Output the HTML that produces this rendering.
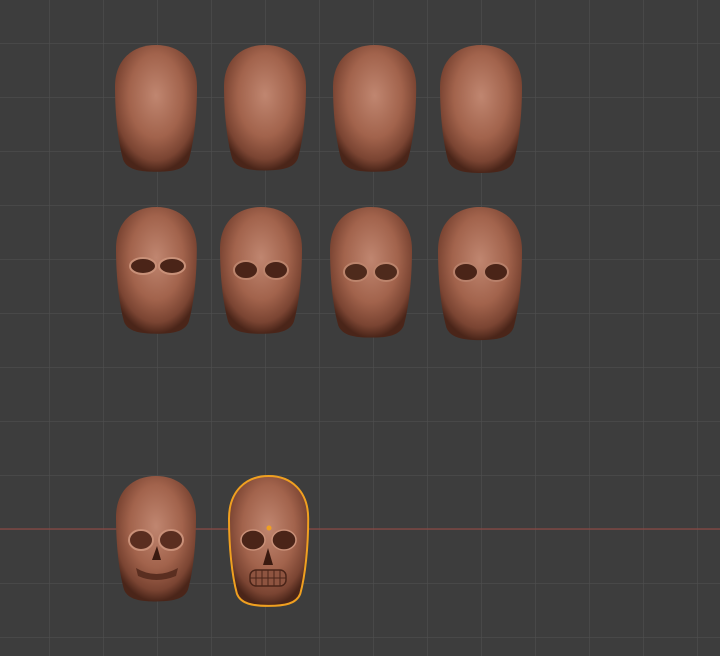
<!DOCTYPE html>
<html><head><meta charset="utf-8"><style>
html,body{margin:0;padding:0;background:#3d3d3d;}
svg{display:block}
</style></head><body>
<svg width="720" height="656" viewBox="0 0 720 656" xmlns="http://www.w3.org/2000/svg">
<defs>
<radialGradient id="g" cx="0.5" cy="0.4" r="0.6">
<stop offset="0" stop-color="#c08670"/>
<stop offset="0.55" stop-color="#a2634c"/>
<stop offset="0.85" stop-color="#7a4432"/>
<stop offset="1" stop-color="#4a2519"/>
</radialGradient>
<path id="h" d="M40,0 C63,0 80,15 80,42 C80,70 77,98 72,116 C68,126 56,128 40,128 C24,128 12,126 8,116 C3,98 0,70 0,42 C0,15 17,0 40,0Z"/>
<pattern id="grid" width="54" height="54" patternUnits="userSpaceOnUse" x="49" y="43">
<path d="M0,0 H54 M0,0 V54" stroke="#4e4e4e" stroke-width="1.2" fill="none"/>
</pattern>
</defs>
<rect width="720" height="656" fill="#3d3d3d"/>
<rect width="720" height="656" fill="url(#grid)"/>
<line x1="0" y1="529" x2="720" y2="529" stroke="#8a4a44" stroke-width="1.2"/>

<use href="#h" fill="url(#g)" transform="translate(115,45) scale(1.025,0.99)"/>
<use href="#h" fill="url(#g)" transform="translate(224,45) scale(1.025,0.98)"/>
<use href="#h" fill="url(#g)" transform="translate(333,45) scale(1.04,0.99)"/>
<use href="#h" fill="url(#g)" transform="translate(440,45) scale(1.025,1.0)"/>

<g>
<use href="#h" fill="url(#g)" transform="translate(116,207) scale(1.01,0.99)"/>
<ellipse cx="143" cy="266" rx="13" ry="8" fill="#4a2418" stroke="#c89078" stroke-width="2"/>
<ellipse cx="172" cy="266" rx="13" ry="8" fill="#4a2418" stroke="#c89078" stroke-width="2"/>
</g>
<g>
<use href="#h" fill="url(#g)" transform="translate(220,207) scale(1.025,0.99)"/>
<ellipse cx="246" cy="270" rx="12" ry="9" fill="#4a2418" stroke="#bc846c" stroke-width="2"/>
<ellipse cx="276" cy="270" rx="12" ry="9" fill="#4a2418" stroke="#bc846c" stroke-width="2"/>
</g>
<g>
<use href="#h" fill="url(#g)" transform="translate(330,207) scale(1.025,1.02)"/>
<ellipse cx="356" cy="272" rx="12" ry="9" fill="#4e2a1c" stroke="#bc846c" stroke-width="2"/>
<ellipse cx="386" cy="272" rx="12" ry="9" fill="#4e2a1c" stroke="#bc846c" stroke-width="2"/>
</g>
<g>
<use href="#h" fill="url(#g)" transform="translate(438,207) scale(1.05,1.04)"/>
<ellipse cx="466" cy="272" rx="12" ry="9" fill="#4a2418" stroke="#b8806a" stroke-width="2"/>
<ellipse cx="496" cy="272" rx="12" ry="9" fill="#4a2418" stroke="#b8806a" stroke-width="2"/>
</g>

<g>
<use href="#h" fill="url(#g)" transform="translate(116,476) scale(1.0,0.98)"/>
<ellipse cx="141" cy="540" rx="12" ry="10" fill="#5a2e20" stroke="#c99078" stroke-width="2"/>
<ellipse cx="171" cy="540" rx="12" ry="10" fill="#5a2e20" stroke="#c99078" stroke-width="2"/>
<path d="M152,560 L157,546 L161,560Z" fill="#3a1a10"/>
<path d="M136,568 Q156,580 178,568 L176,576 Q156,584 138,576Z" fill="#5a2e20"/>
</g>
<g>
<use href="#h" fill="url(#g)" stroke="#f0a020" stroke-width="2" transform="translate(229,476) scale(0.99,1.015)"/>
<ellipse cx="253" cy="540" rx="12" ry="10" fill="#4a2418" stroke="#c99078" stroke-width="1.5"/>
<ellipse cx="284" cy="540" rx="12" ry="10" fill="#4a2418" stroke="#c99078" stroke-width="1.5"/>
<path d="M263,565 L268,548 L273,565Z" fill="#3a1a10"/>
<rect x="250" y="570" width="36" height="16" rx="6" fill="#8e5440" stroke="#4a2418" stroke-width="1.5"/>
<path d="M256,570 V586 M262,570 V586 M268,570 V586 M274,570 V586 M280,570 V586 M250,578 H286" stroke="#4a2418" stroke-width="1"/>
<circle cx="269" cy="528" r="2.5" fill="#f0a020"/>
</g>
</svg>
</body></html>
